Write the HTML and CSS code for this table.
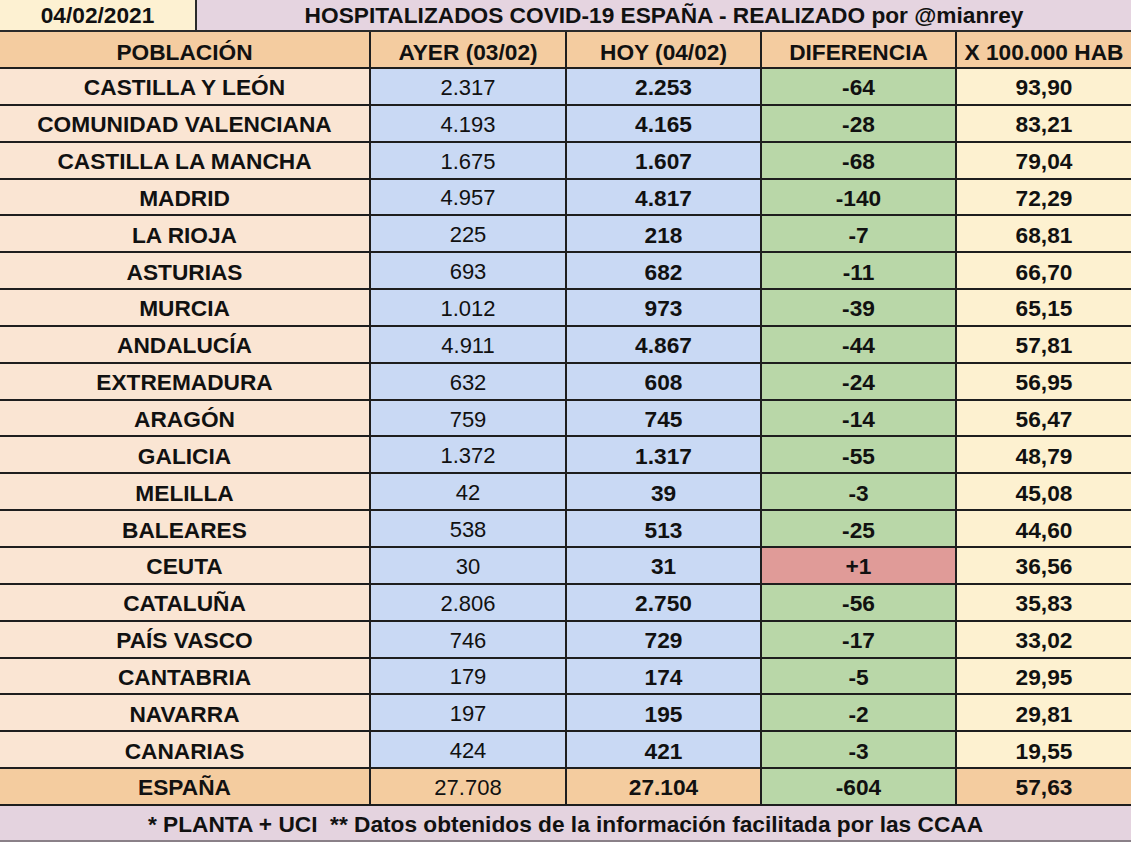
FILE: index.html
```html
<!DOCTYPE html>
<html lang="es">
<head>
<meta charset="utf-8">
<title>Hospitalizados COVID-19 España</title>
<link rel="stylesheet" href="styles.css">
</head>
<body>
<div class="sheet">
  <div class="topbar">
    <div class="date">04/02/2021</div>
    <div class="title">HOSPITALIZADOS COVID-19 ESPAÑA - REALIZADO por @mianrey</div>
  </div>
  <div class="table">
    <div class="c hd">POBLACIÓN</div><div class="c hd">AYER (03/02)</div><div class="c hd">HOY (04/02)</div><div class="c hd">DIFERENCIA</div><div class="c hd">X 100.000 HAB</div>

    <div class="c pob">CASTILLA Y LEÓN</div><div class="c ayer">2.317</div><div class="c hoy">2.253</div><div class="c dif">-64</div><div class="c hab">93,90</div>
    <div class="c pob">COMUNIDAD VALENCIANA</div><div class="c ayer">4.193</div><div class="c hoy">4.165</div><div class="c dif">-28</div><div class="c hab">83,21</div>
    <div class="c pob">CASTILLA LA MANCHA</div><div class="c ayer">1.675</div><div class="c hoy">1.607</div><div class="c dif">-68</div><div class="c hab">79,04</div>
    <div class="c pob">MADRID</div><div class="c ayer">4.957</div><div class="c hoy">4.817</div><div class="c dif">-140</div><div class="c hab">72,29</div>
    <div class="c pob">LA RIOJA</div><div class="c ayer">225</div><div class="c hoy">218</div><div class="c dif">-7</div><div class="c hab">68,81</div>
    <div class="c pob">ASTURIAS</div><div class="c ayer">693</div><div class="c hoy">682</div><div class="c dif">-11</div><div class="c hab">66,70</div>
    <div class="c pob">MURCIA</div><div class="c ayer">1.012</div><div class="c hoy">973</div><div class="c dif">-39</div><div class="c hab">65,15</div>
    <div class="c pob">ANDALUCÍA</div><div class="c ayer">4.911</div><div class="c hoy">4.867</div><div class="c dif">-44</div><div class="c hab">57,81</div>
    <div class="c pob">EXTREMADURA</div><div class="c ayer">632</div><div class="c hoy">608</div><div class="c dif">-24</div><div class="c hab">56,95</div>
    <div class="c pob">ARAGÓN</div><div class="c ayer">759</div><div class="c hoy">745</div><div class="c dif">-14</div><div class="c hab">56,47</div>
    <div class="c pob">GALICIA</div><div class="c ayer">1.372</div><div class="c hoy">1.317</div><div class="c dif">-55</div><div class="c hab">48,79</div>
    <div class="c pob">MELILLA</div><div class="c ayer">42</div><div class="c hoy">39</div><div class="c dif">-3</div><div class="c hab">45,08</div>
    <div class="c pob">BALEARES</div><div class="c ayer">538</div><div class="c hoy">513</div><div class="c dif">-25</div><div class="c hab">44,60</div>
    <div class="c pob">CEUTA</div><div class="c ayer">30</div><div class="c hoy">31</div><div class="c dif up">+1</div><div class="c hab">36,56</div>
    <div class="c pob">CATALUÑA</div><div class="c ayer">2.806</div><div class="c hoy">2.750</div><div class="c dif">-56</div><div class="c hab">35,83</div>
    <div class="c pob">PAÍS VASCO</div><div class="c ayer">746</div><div class="c hoy">729</div><div class="c dif">-17</div><div class="c hab">33,02</div>
    <div class="c pob">CANTABRIA</div><div class="c ayer">179</div><div class="c hoy">174</div><div class="c dif">-5</div><div class="c hab">29,95</div>
    <div class="c pob">NAVARRA</div><div class="c ayer">197</div><div class="c hoy">195</div><div class="c dif">-2</div><div class="c hab">29,81</div>
    <div class="c pob">CANARIAS</div><div class="c ayer">424</div><div class="c hoy">421</div><div class="c dif">-3</div><div class="c hab">19,55</div>

    <div class="c tot">ESPAÑA</div><div class="c tot ayer-t">27.708</div><div class="c tot">27.104</div><div class="c dif">-604</div><div class="c tot">57,63</div>
  </div>
  <div class="footer">* PLANTA + UCI  ** Datos obtenidos de la información facilitada por las CCAA</div>
</div>
</body>
</html>
```

FILE: styles.css
```css
html, body {
  margin: 0;
  padding: 0;
  background: #ffffff;
}

body {
  font-family: "Liberation Sans", Arial, sans-serif;
  color: #111111;
  font-size: 22px;
}

.sheet {
  width: 1131px;
  height: 842px;
  overflow: hidden;
  display: flex;
  flex-direction: column;
}

.topbar {
  display: flex;
  height: 30px;
  border-bottom: 2px solid #2a2a2a;
  font-weight: bold;
  font-size: 22.7px;
}

.date {
  width: 195px;
  border-right: 2px solid #2a2a2a;
  background: #fdf1d2;
  display: flex;
  align-items: center;
  justify-content: center;
  padding-top: 1px;
}

.title {
  flex: 1;
  background: #e5d4e0;
  display: flex;
  align-items: center;
  justify-content: center;
  padding-top: 1px;
}

.table {
  display: grid;
  grid-template-columns: 369px 194px 193px 193px 1fr;
  grid-template-rows: 35px repeat(20, 34.85px);
  column-gap: 2px;
  row-gap: 2px;
  background: #1e1e1e;
  border-bottom: 2px solid #1e1e1e;
}

.c {
  display: flex;
  align-items: center;
  justify-content: center;
  padding-top: 3px;
  box-sizing: border-box;
  white-space: nowrap;
}

.hd {
  background: #f4cca0;
  font-weight: bold;
  font-size: 22.7px;
  padding-top: 6px;
}

.pob {
  background: #fae5d3;
  font-weight: bold;
  font-size: 22.7px;
}

.ayer {
  background: #c9d9f4;
}

.hoy {
  background: #c9d9f4;
  font-weight: bold;
  font-size: 22.7px;
}

.dif {
  background: #b9d7a8;
  font-weight: bold;
  font-size: 22.7px;
}

.dif.up {
  background: #e09b98;
}

.hab {
  background: #fdf1d0;
  font-weight: bold;
  font-size: 22.7px;
}

.tot {
  background: #f4cc9f;
  font-weight: bold;
  font-size: 22.7px;
}

.tot.ayer-t {
  font-weight: normal;
  font-size: 22px;
}

.footer {
  flex: 1;
  background: #e4d3df;
  border-bottom: 2px solid #8a8088;
  display: flex;
  align-items: center;
  justify-content: center;
  padding-top: 4px;
  font-weight: bold;
  font-size: 22.7px;
  white-space: pre;
}
```
